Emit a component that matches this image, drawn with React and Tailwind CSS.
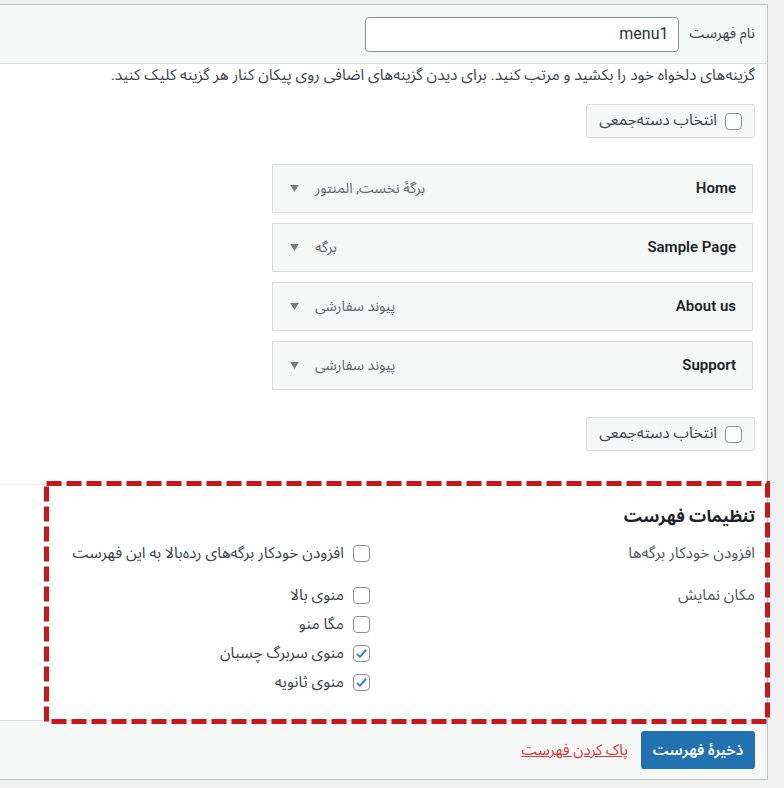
import React from 'react';

const font = { fontFamily: 'Roboto, "Noto Sans Arabic", "DejaVu Sans", sans-serif' };

const menuItems = [
	{ title: 'Home', type: 'برگهٔ نخست, المنتور' },
	{ title: 'Sample Page', type: 'برگه' },
	{ title: 'About us', type: 'پیوند سفارشی' },
	{ title: 'Support', type: 'پیوند سفارشی' },
];

const locations = [
	{ label: 'منوی بالا', checked: false },
	{ label: 'مگا منو', checked: false },
	{ label: 'منوی سربرگ چسبان', checked: true },
	{ label: 'منوی ثانویه', checked: true },
];

function Checkbox({ checked }) {
	return (
		<span className="flex h-[17px] w-[17px] shrink-0 items-center justify-center rounded-[4px] border border-[#8c8f94] bg-white">
			{checked && (
				<svg viewBox="0 0 20 20" className="h-[15px] w-[15px]">
					<path d="M4 10.5 L8 14.5 L16 5" fill="none" stroke="#3582c4" strokeWidth="2.6" strokeLinejoin="round" />
				</svg>
			)}
		</span>
	);
}

function BulkSelect() {
	return (
		<div className="flex h-[34px] w-[169px] items-center gap-2 rounded-[2px] border border-[#dcdcde] bg-[#f6f7f7] pr-[12px]">
			<Checkbox />
			<span className="text-[15.5px] text-[#3c434a]">انتخاب دسته‌جمعی</span>
		</div>
	);
}

function MenuItem({ title, type }) {
	return (
		<div className="ms-[2px] flex h-[49px] w-[481px] items-center justify-between border border-[#dcdcde] bg-[#f6f7f7] pl-[17px] pr-[16px]">
			<span className="text-[15px] font-semibold text-[#1d2327]">{title}</span>
			<div className="flex items-center gap-[16px]">
				<span className="text-[14.3px] text-[#646970]">{type}</span>
				<svg viewBox="0 0 10 8" className="h-[7px] w-[9px]">
					<path d="M0 0 L10 0 L5 8 Z" fill="#787c82" />
				</svg>
			</div>
		</div>
	);
}

export default function App() {
	return (
		<div className="min-h-screen bg-[#f0f0f1] pt-[4px]" style={font}>
			<div dir="rtl" className="relative w-[768px] border-y border-r border-[#c3c4c7] bg-white">
				{/* header */}
				<div className="flex h-[59px] items-center gap-[10px] border-b border-[#dcdcde] bg-[#f6f7f7] pr-[12px]">
					<span className="text-[14.6px] text-[#3c434a]">نام فهرست</span>
					<div dir="ltr" className="flex h-[35px] w-[314px] items-center justify-end rounded-[4px] border border-[#8c8f94] bg-white px-[10px] text-[16px] text-[#2c3338]">
						menu1
					</div>
				</div>

				{/* menu structure */}
				<div className="pr-[12px] pt-0 pb-[33px]">
					<p className="text-[15.5px] leading-[22px] text-[#3c434a]">
						گزینه‌های دلخواه خود را بکشید و مرتب کنید. برای دیدن گزینه‌های اضافی روی پیکان کنار هر گزینه کلیک کنید.
					</p>
					<div className="mt-[18px]">
						<BulkSelect />
					</div>
					<div className="mt-[26px] flex flex-col gap-[10px]">
						{menuItems.map((m) => (
							<MenuItem key={m.title} {...m} />
						))}
					</div>
					<div className="mt-[27px]">
						<BulkSelect />
					</div>
				</div>

				{/* menu settings */}
				<div className="h-[236px] border-t border-[#f0f0f1] pr-[12px] pt-[19px]">
					<h3 className="text-[17px] font-bold leading-6 text-[#1d2327]">تنظیمات فهرست</h3>
					<div className="mt-[14px] flex items-center">
						<div className="w-[385px] text-[15.5px] text-[#50575e]">افزودن خودکار برگه‌ها</div>
						<label className="flex items-center gap-[9px] text-[15.5px] text-[#3c434a]">
							<Checkbox />
							افزودن خودکار برگه‌های رده‌بالا به این فهرست
						</label>
					</div>
					<div className="mt-[21px] flex items-start">
						<div className="w-[385px] pt-0 text-[15.5px] leading-[18px] text-[#50575e]">مکان نمایش</div>
						<div className="flex flex-col gap-[11px]">
							{locations.map((l) => (
								<label key={l.label} className="flex h-[18px] items-center gap-[9px] text-[15.5px] text-[#3c434a]">
									<Checkbox checked={l.checked} />
									{l.label}
								</label>
							))}
						</div>
					</div>
				</div>

				{/* footer */}
				<div className="flex h-[59px] items-center gap-[13px] border-t border-[#dcdcde] bg-[#f6f7f7] pr-[12px]">
					<button className="h-[38px] w-[114px] rounded-[3px] bg-[#2271b1] text-[15px] font-semibold text-white">
						ذخیرهٔ فهرست
					</button>
					<a href="#" className="text-[15px] text-[#d63638] underline">
						پاک کردن فهرست
					</a>
				</div>

				{/* annotation */}
				<svg className="absolute left-[44px] top-[476px]" width="726" height="243" viewBox="0 0 726 243">
					<rect x="2.5" y="2.5" width="721" height="238" fill="none" stroke="#c8161d" strokeWidth="5" strokeDasharray="15 5" />
				</svg>
			</div>
			<div className="h-[4px]" />
		</div>
	);
}
